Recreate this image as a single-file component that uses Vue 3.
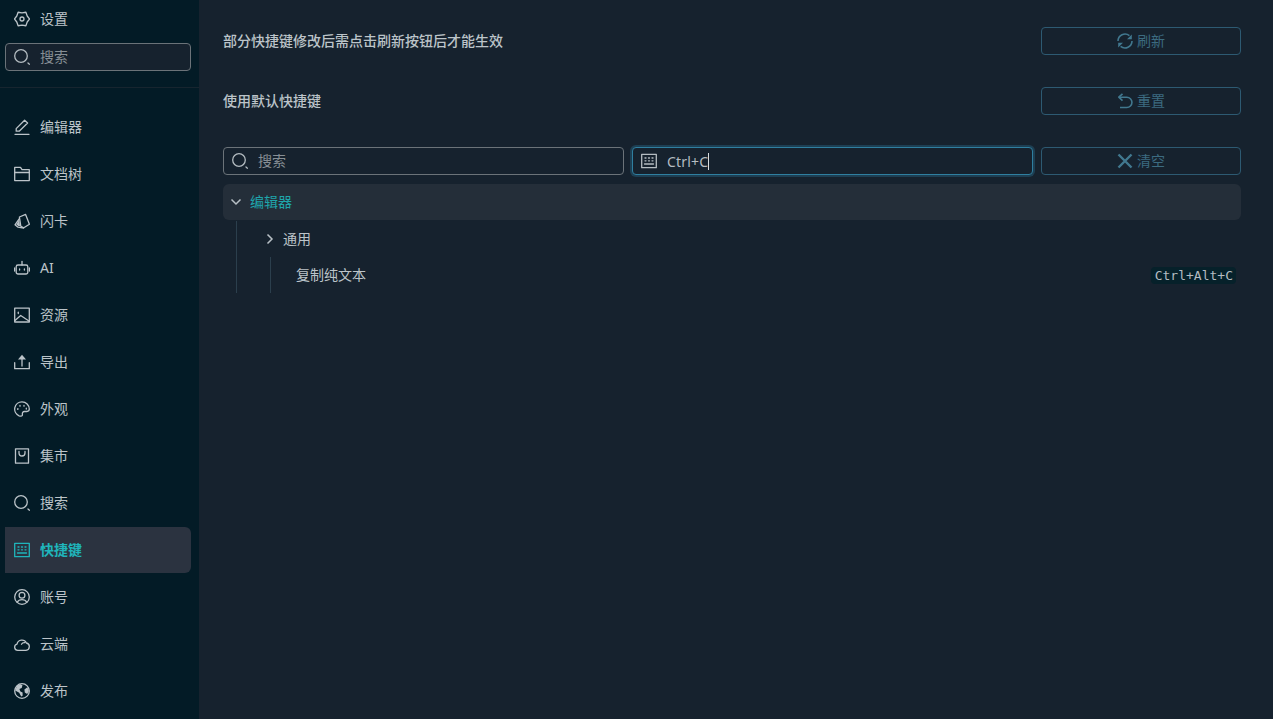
<script setup>
const items = [
  { label: '编辑器', icon: 'edit' },
  { label: '文档树', icon: 'folder' },
  { label: '闪卡', icon: 'cards' },
  { label: 'AI', icon: 'robot' },
  { label: '资源', icon: 'image' },
  { label: '导出', icon: 'upload' },
  { label: '外观', icon: 'palette' },
  { label: '集市', icon: 'bag' },
  { label: '搜索', icon: 'search' },
  { label: '快捷键', icon: 'keyboard', active: true },
  { label: '账号', icon: 'account' },
  { label: '云端', icon: 'cloud' },
  { label: '发布', icon: 'globe' },
]
const iconPaths = {
  gear: ['M4.100 1.250L8 1.900l3.900-.65L13.200 5l2.400 3-2.400 3-1.300 3.750L8 14.100l-3.900.65L2.800 11 .4 8l2.400-3z', 'M8 6a2 2 0 1 0 0 4 2 2 0 0 0 0-4z'],
  edit: ['M1 15.300h14', 'M2.200 12.200V9.600L10.600 1.200 13.600 4l-8.400 8.200z'],
  folder: ['M.7 1.400h5.800l1.500 2.300h7.300v10.900H.7z', 'M.7 6.500h14.600'],
  cards: ['M5.400 4l6.200-2.600 3.800 9.800-5.600 3.600-3-1.600z', 'M5.200 5.800L1 11.800l3 2.400 5.600.800'],
  robot: ['M4 5h8a1.800 1.800 0 0 1 1.800 1.800v5.400A1.800 1.800 0 0 1 12 14H4a1.800 1.800 0 0 1-1.800-1.800V6.800A1.800 1.800 0 0 1 4 5z', 'M8 5V1.500', 'M.6 8v3', 'M15.400 8v3', 'M5.600 9v1', 'M10.400 9v1'],
  image: ['M.7 1.200h14.600v13.800H.7z', 'M.7 13.800l6-5.300 8.600 5.800', 'M4.300 5.200v1.400'],
  upload: ['M.7 8.700v6h14.600v-6', 'M8 5v7'],
  palette: ['M8 .800a7.300 7.300 0 0 0-2.900 14c1.800.7 3.600.3 3.300-1.500-.2-1.500.4-2.800 2-2.800h2.600c1.300 0 2.300-1 2.300-2.400A7.300 7.300 0 0 0 8 .800z', 'M3.800 7.600v.8', 'M6 4.400v.8', 'M10 4.400v.8', 'M12.300 7.200v.8'],
  bag: ['M1.500 .8h13v14.400h-13z', 'M5 3.500v1.500a3 3 0 0 0 6 0V3.500'],
  search: ['M7 .7a6.300 6.300 0 1 0 0 12.600A6.300 6.300 0 0 0 7 .7z', 'M14 14l1.400 1.200'],
  keyboard: ['M.7 1.300h14.600v13.400H.7z', 'M4 5h1', 'M7.500 5h1', 'M11 5h1', 'M4 7.800h1', 'M7.500 7.800h1', 'M11 7.800h1', 'M3.500 11h9'],
  account: ['M8 .7a7.300 7.300 0 1 0 0 14.600A7.300 7.300 0 0 0 8 .7z', 'M8 3.400a2.900 2.900 0 1 0 0 5.800 2.900 2.900 0 0 0 0-5.800z', 'M3.200 13.300c.9-1.800 2.600-2.700 4.800-2.700s3.900.9 4.800 2.700'],
  cloud: ['M3.800 14.300a3.100 3.100 0 0 1-.8-6.100A5 5 0 0 1 12.400 7a3.700 3.700 0 0 1-.4 7.300z', 'M7.500 8.200a3.200 3.200 0 0 1 3.300-1.600'],
  globe: ['M8 .7a7.300 7.300 0 1 0 0 14.600A7.300 7.300 0 0 0 8 .7z'],
}
</script>

<template>
  <div class="app">
    <aside class="sidebar">
      <div class="title-row">
        <svg class="icon" viewBox="0 0 16 16"><path v-for="d in iconPaths.gear" :key="d" :d="d" /></svg>
        <span>设置</span>
      </div>
      <label class="field side-field">
        <svg class="icon" viewBox="0 0 16 16"><path v-for="d in iconPaths.search" :key="d" :d="d" /></svg>
        <span class="placeholder">搜索</span>
      </label>
      <div class="divider"></div>
      <nav class="nav">
        <a v-for="item in items" :key="item.label" class="nav-item" :class="{ active: item.active }">
          <svg class="icon" viewBox="0 0 16 16">
            <path v-for="d in iconPaths[item.icon]" :key="d" :d="d" />
            <path v-if="item.icon === 'globe'" class="solid" d="M3 2.800l3.200-1.500 2.300 1-.8 2.600-2.300 1 1 2.500 2.200 1.100v3.300l-1.400.8-2-3.800L1.200 7.400zM10.400 6.400l3-2.200 1.500 3.700-1.700 3-2.400-1.400z" />
            <path v-if="item.icon === 'upload'" class="solid" d="M8 .8l4 4.700H4z" />
            <path v-if="item.icon === 'cards'" class="solid" d="M5.200 6.500L2.400 11.500l2.200 1.800 1.400-.2z" />
          </svg>
          <span>{{ item.label }}</span>
        </a>
      </nav>
    </aside>

    <main class="main">
      <div class="setting-row">
        <span>部分快捷键修改后需点击刷新按钮后才能生效</span>
        <button class="btn">
          <svg class="btn-icon" viewBox="0 0 16 16"><path d="M1 8a7 7 0 0 1 11.400-5.400" /><path d="M15 8a7 7 0 0 1-11.400 5.400" /><path class="solid" d="M14.800 1.400v4.800h-4.800zM1.200 14.600V9.800h4.800z" /></svg>
          <span>刷新</span>
        </button>
      </div>
      <div class="setting-row">
        <span>使用默认快捷键</span>
        <button class="btn">
          <svg class="btn-icon" viewBox="0 0 16 16"><path d="M5.500 .8L1.800 4.200l3.700 3.400" /><path d="M2 4.200h7.800a5 5 0 0 1 0 10.300H3" /></svg>
          <span>重置</span>
        </button>
      </div>
      <div class="search-row">
        <label class="field">
          <svg class="icon" viewBox="0 0 16 16"><path v-for="d in iconPaths.search" :key="d" :d="d" /></svg>
          <span class="placeholder">搜索</span>
        </label>
        <label class="field focused">
          <svg class="icon" viewBox="0 0 16 16"><path v-for="d in iconPaths.keyboard" :key="d" :d="d" /></svg>
          <span class="typed">Ctrl+C</span>
        </label>
        <button class="btn">
          <svg class="btn-icon x" viewBox="0 0 16 16"><path d="M1.500 1.500l13 13M14.500 1.500l-13 13" /></svg>
          <span>清空</span>
        </button>
      </div>

      <div class="tree-head">
        <svg class="chev" viewBox="0 0 12 12"><path d="M1.500 3.500L6 8l4.500-4.500" /></svg>
        <span>编辑器</span>
      </div>
      <div class="tree-body">
        <div class="tree-row sub">
          <svg class="chev" viewBox="0 0 12 12"><path d="M3.500 1.500L8 6l-4.500 4.500" /></svg>
          <span>通用</span>
        </div>
        <div class="leaf-wrap">
          <div class="tree-row leaf">
            <span>复制纯文本</span>
            <kbd>Ctrl+Alt+C</kbd>
          </div>
        </div>
      </div>
    </main>
  </div>
</template>

<style>
html, body { margin: 0; height: 100%; background: #16222e; }
</style>

<style scoped>
.app {
  display: flex;
  height: 719px;
  overflow: hidden;
  font-family: "Noto Sans", "Noto Sans CJK SC", sans-serif;
  font-size: 14px;
  line-height: 20px;
  color: #bcc4c9;
  background: #16222e;
}
.sidebar {
  width: 199px;
  flex: none;
  background: #031b26;
  display: flex;
  flex-direction: column;
}
.title-row {
  height: 38px;
  display: flex;
  align-items: center;
  gap: 10px;
  padding-left: 14px;
}
.icon {
  width: 16px;
  height: 16px;
  flex: none;
  fill: none;
  stroke: currentColor;
  stroke-width: 1.300;
  stroke-linejoin: round;
  stroke-linecap: round;
}
.solid { fill: currentColor; stroke: none; }
.field {
  display: flex;
  align-items: center;
  gap: 10px;
  height: 26px;
  padding-left: 8px;
  flex: 1;
  border: 1px solid #6b7379;
  border-radius: 4px;
  background: #16222e;
  color: #b4bcc1;
}
.side-field {
  flex: none;
  margin: 5px 8px 0 5px;
}
.placeholder { color: #868e94; }
.divider {
  height: 1px;
  margin-top: 16px;
  background: #17252f;
}
.nav {
  display: flex;
  flex-direction: column;
  padding: 16px 8px 0 5px;
}
.nav-item {
  height: 46px;
  margin-bottom: 1px;
  display: flex;
  align-items: center;
  gap: 10px;
  padding-left: 9px;
  border-radius: 0 6px 6px 0;
}
.nav-item.active {
  background: #2b3340;
  color: #1fb5bb;
  font-weight: 700;
}
.main {
  flex: 1;
  padding: 11px 32px 0 24px;
  display: flex;
  flex-direction: column;
}
.setting-row {
  height: 60px;
  display: flex;
  align-items: center;
  justify-content: space-between;
  font-weight: 500;
}
.btn {
  width: 200px;
  height: 28px;
  flex: none;
  display: flex;
  align-items: center;
  justify-content: center;
  gap: 4px;
  padding: 0;
  background: transparent;
  border: 1px solid #2d5a72;
  border-radius: 4px;
  color: #3c6b80;
  font: inherit;
  font-weight: 400;
}
.btn-icon {
  width: 16px;
  height: 16px;
  fill: none;
  stroke: #41788f;
  stroke-width: 1.600;
  stroke-linejoin: round;
}
.btn-icon .solid { fill: #41788f; stroke: none; }
.btn-icon.x { stroke-width: 2.400; }
.search-row {
  display: flex;
  gap: 8px;
  margin-top: 16px;
  height: 28px;
}
.focused {
  border-color: #2f7fa0;
  box-shadow: 0 0 0 2px rgba(47, 134, 168, 0.3);
}
.typed {
  border-right: 1px solid #d8dee2;
  line-height: 17px;
  letter-spacing: .2px;
}
.tree-head {
  margin-top: 9px;
  height: 36px;
  display: flex;
  align-items: center;
  gap: 8px;
  padding-left: 7px;
  border-radius: 6px;
  background: #242e39;
  color: #1fa5ab;
}
.chev {
  width: 12px;
  height: 12px;
  flex: none;
  fill: none;
  stroke: #b8c0c6;
  stroke-width: 1.500;
}
.tree-body {
  margin-left: 13px;
  border-left: 1px solid #2b3f4d;
  height: 72px;
  margin-top: 1px;
}
.tree-row {
  display: flex;
  align-items: center;
  height: 36px;
}
.sub {
  gap: 7px;
  padding-left: 27px;
}
.leaf-wrap {
  margin-left: 33px;
  border-left: 1px solid #2b3f4d;
}
.leaf {
  justify-content: space-between;
  padding: 0 5px 0 25px;
}
kbd {
  font-family: "DejaVu Sans Mono", monospace;
  font-size: 13px;
  line-height: 17px;
  padding: 0 3px 0 4px;
  border-radius: 4px;
  background: #06212a;
  color: #b4bcc2;
}
</style>
